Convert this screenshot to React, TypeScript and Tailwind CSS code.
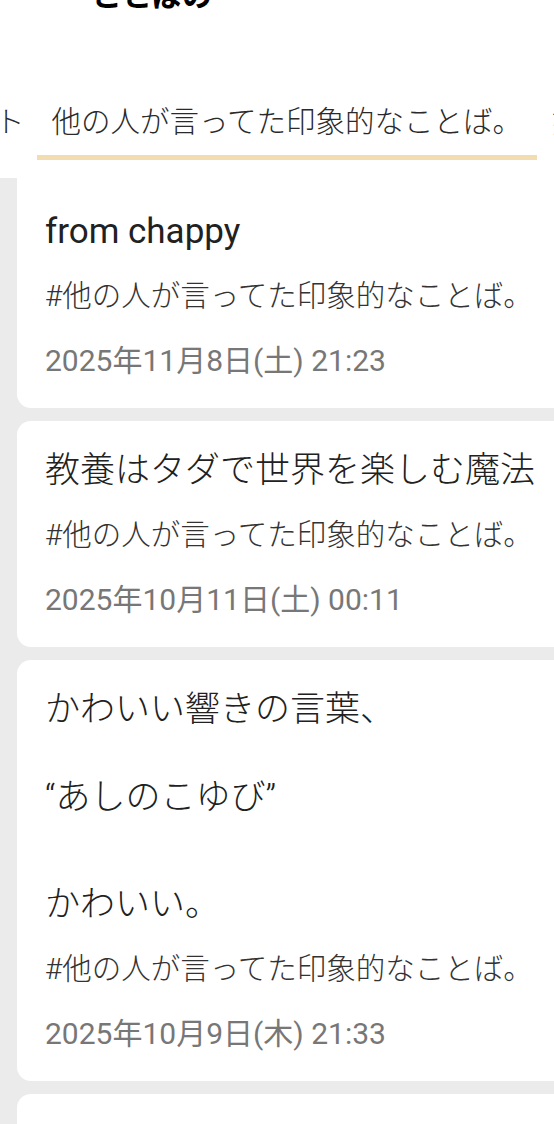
import React from 'react';

interface Post {
  id: number;
  lines: string[];
  date: string;
  latin?: boolean;
}

const TAG = '#他の人が言ってた印象的なことば。';

const posts: Post[] = [
  { id: 1, lines: ['from chappy'], date: '2025年11月8日(土) 21:23', latin: true },
  { id: 2, lines: ['教養はタダで世界を楽しむ魔法'], date: '2025年10月11日(土) 00:11' },
  {
    id: 3,
    lines: ['かわいい響きの言葉、', '“あしのこゆび”', 'かわいい。'],
    date: '2025年10月9日(木) 21:33',
  },
];

const font = { fontFamily: 'Roboto, "Noto Sans CJK JP", sans-serif' };

const PostCard: React.FC<{ post: Post; first?: boolean }> = ({ post, first }) => (
  <div
    className={`bg-white mr-[-24px] pl-[28px] pb-[27px] ${
      first ? 'rounded-b-[14px] pt-[32px]' : 'rounded-[14px] pt-[28px]'
    }`}
  >
    <div
      className={`text-[35px] leading-[44px] text-[#212121] ${
        post.latin ? 'font-normal' : 'font-light'
      }`}
    >
      {post.lines.map((line, i) => (
        <p key={i} className={i === 0 ? '' : i === 1 ? 'mt-[44px]' : 'mt-[63px]'}>
          {line}
        </p>
      ))}
    </div>
    <p className="mt-[22px] text-[29.5px] leading-[40px] text-[#333333] font-light">{TAG}</p>
    <p className="mt-[25px] text-[30px] leading-[40px] text-[#777777]">{post.date}</p>
  </div>
);

export default function App() {
  return (
    <div className="w-[554px] h-[1124px] overflow-hidden bg-white" style={font}>
      {/* page title, scrolled mostly out of view */}
      <div className="h-[16px] overflow-hidden">
        <h1 className="-mt-[24px] pl-[92px] text-[30px] leading-[40px] font-bold text-black">
          ことばの
        </h1>
      </div>

      {/* tabs */}
      <div className="mt-[86px] flex whitespace-nowrap text-[29.5px] leading-[40px] text-[#2a2a2a] font-light">
        <div className="-ml-[64px] pr-[12px] pb-[13px] border-b-[5px] border-transparent shrink-0">
          リスト
        </div>
        <div className="pl-[15px] pr-[15px] pb-[13px] border-b-[5px] border-[#f3dcb0] shrink-0">
          他の人が言ってた印象的なことば。
        </div>
        <div className="pl-[15px] pb-[13px] border-b-[5px] border-transparent shrink-0">
          好きな言葉
        </div>
      </div>

      {/* posts */}
      <div className="mt-[18px] bg-[#ebebeb] pl-[17px] flex flex-col gap-[13px] h-full">
        {posts.map((p, i) => (
          <PostCard key={p.id} post={p} first={i === 0} />
        ))}
        <div className="bg-white mr-[-24px] rounded-[14px] h-[80px]" />
      </div>
    </div>
  );
}
